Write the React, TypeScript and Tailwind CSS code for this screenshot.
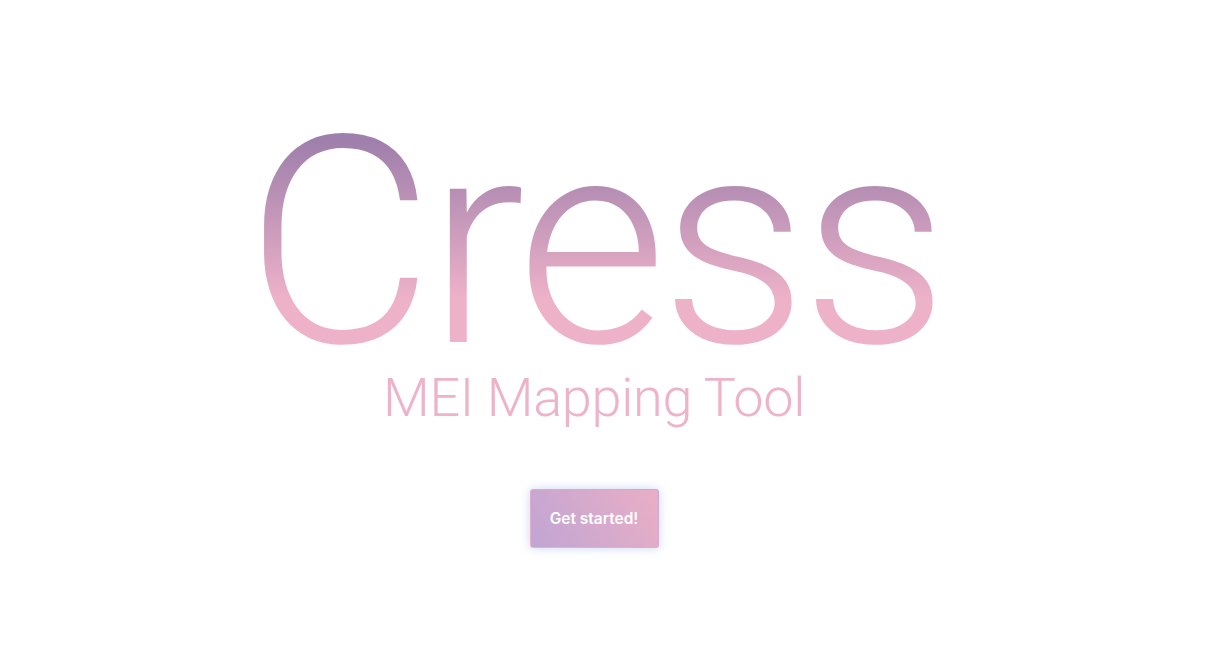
export default function App() {
  return (
    <main className="w-full h-[652px] bg-white pr-6 flex flex-col items-center font-[family-name:Roboto]">
      {/* Title */}
      <h1 className="mt-[115px] text-[290px] leading-[256px] font-light tracking-[-6px] bg-gradient-to-b from-[#9f7fab] from-[10%] to-[#eeb2c8] to-[72%] bg-clip-text text-transparent">
        Cress
      </h1>
      <h2 className="text-[54px] leading-[54px] font-light tracking-[-0.3px] text-[#edb3c9]">
        MEI Mapping Tool
      </h2>

      {/* Action */}
      <div className="mt-[64px] p-px rounded-[3px] bg-gradient-to-tr from-[#eeb0c8] to-[#c6a8d4] shadow-[0_0_10px_rgba(160,180,230,0.55)]">
        <button className="w-[127px] h-[57px] rounded-[2px] bg-linear-60 from-[#c0a5d3] to-[#eaaec5] text-white text-[15.5px] font-semibold font-[family-name:Inter]">
          Get started!
        </button>
      </div>
    </main>
  );
}
